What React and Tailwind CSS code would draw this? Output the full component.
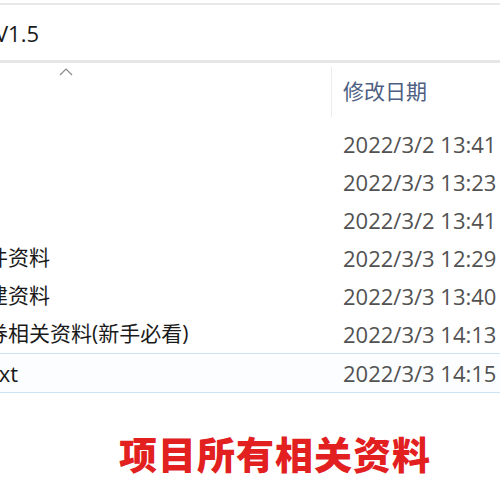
import React from "react";

const rows = [
  { name: "", date: "2022/3/2 13:41" },
  { name: "", date: "2022/3/3 13:23" },
  { name: "", date: "2022/3/2 13:41" },
  { name: "件资料", date: "2022/3/3 12:29" },
  { name: "建资料", date: "2022/3/3 13:40" },
  { name: "券相关资料(新手必看)", date: "2022/3/3 14:13" },
  { name: "txt", date: "2022/3/3 14:15", selected: true, latin: true },
];

export default function App() {
  return (
    <div
      className="w-[500px] h-[500px] bg-white overflow-hidden flex flex-col"
      style={{ fontFamily: '"Open Sans", "Noto Sans CJK SC", sans-serif' }}
    >
      <div className="h-[3px]" />
      <div className="h-[2px] bg-[#e8e8e8]" />
      <div className="h-[55px] flex items-center">
        <span className="ml-[-5px] text-[22px] text-[#1a1a1a] leading-none">V1.5</span>
      </div>
      <div className="h-[3px] bg-[#e6e6e6]" />
      <div className="h-[57px] flex">
        <div className="w-[331px] flex justify-start">
          <svg width="14" height="8" viewBox="0 0 14 8" className="ml-[59px] mt-[5px]">
            <path d="M1 7 L7 1 L13 7" fill="none" stroke="#8a8a8a" strokeWidth="1.2" />
          </svg>
        </div>
        <div className="w-px h-[50px] mt-[4px] bg-[#ececec]" />
        <div className="flex items-center pl-[11px] pb-[2px]">
          <span className="text-[21px] text-[#4d6082]" style={{ fontFamily: '"Noto Sans CJK SC", sans-serif' }}>
            修改日期
          </span>
        </div>
      </div>
      <div className="h-[5px]" />
      {rows.map((r, i) => (
        <div
          key={i}
          className={
            "flex items-center " +
            (r.selected ? "border-y border-[#c9e2f5] bg-[#fbfdff] h-[40px]" : "h-[38px]")
          }
        >
          <div className="w-[332px] overflow-hidden whitespace-nowrap">
            <span
              className={
                "inline-block text-[#1a1a1a] " + (r.latin ? "ml-[-9px] text-[22px]" : "ml-[-13px] text-[21px]")
              }
            >
              {r.name}
            </span>
          </div>
          <div className="pl-[11px] whitespace-nowrap text-[22px] text-[#525252]">{r.date}</div>
        </div>
      ))}
      <div className="flex-1 flex items-center justify-center pl-[50px] pt-[12px]">
        <span
          className="text-[38px] font-black text-[#e2201f] tracking-[1px]"
          style={{ fontFamily: '"Noto Sans CJK SC", sans-serif' }}
        >
          项目所有相关资料
        </span>
      </div>
    </div>
  );
}
